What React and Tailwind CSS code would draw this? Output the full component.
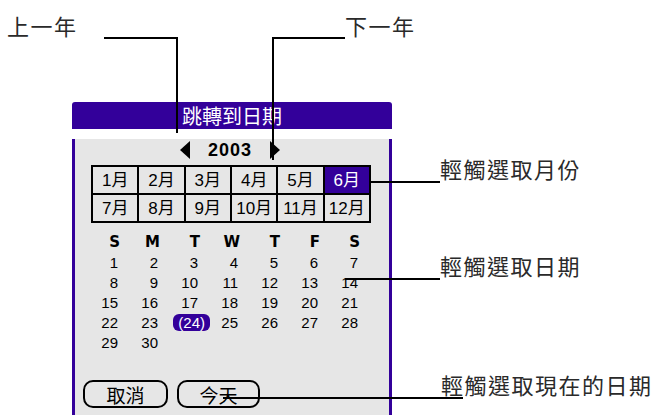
const PURPLE = 'bg-[#33009a]'

const months = ['1月', '2月', '3月', '4月', '5月', '6月', '7月', '8月', '9月', '10月', '11月', '12月']
const weekdays = ['S', 'M', 'T', 'W', 'T', 'F', 'S']
const days = Array.from({ length: 30 }, (_, i) => i + 1)

const CJK = { fontFamily: '"Noto Sans CJK TC", "Noto Sans CJK SC", sans-serif' }

function Arrow({ dir }) {
  return (
    <svg width="10" height="18" viewBox="0 0 10 18" className="block">
      {dir === 'left' ? <polygon points="10,0 10,18 0,9" fill="#000" /> : <polygon points="0,0 0,18 10,9" fill="#000" />}
    </svg>
  )
}

function Label({ children }) {
  return (
    <span className="whitespace-nowrap text-[22px] leading-[22px] tracking-[1.5px] text-[#2a2a2a]" style={CJK}>
      {children}
    </span>
  )
}

// line coming from the dialog, ending under the label on the right
function SideCallout({ className, line, children }) {
  return (
    <div className={`absolute flex items-start ${className}`}>
      <div className={`mt-[24px] h-[2px] shrink-0 bg-black ${line}`} />
      <Label>{children}</Label>
    </div>
  )
}

function PalmButton({ children, width }) {
  return (
    <div className={`flex h-[28px] items-center justify-center rounded-[10px] border-2 border-black text-[19px] leading-none text-black ${width}`}>
      {children}
    </div>
  )
}

export default function App() {
  return (
    <div
      className="relative h-[415px] w-[658px] overflow-hidden bg-white"
      style={{ fontFamily: '"Liberation Sans", "Noto Sans CJK TC", sans-serif' }}
    >
      {/* dialog */}
      <div className="ml-[72px] mt-[102px] w-[320px]">
        <div
          className={`flex h-[27px] items-center justify-center rounded-t-[3px] ${PURPLE} text-[20px] leading-none text-white`}
          style={CJK}
        >
          跳轉到日期
        </div>
        <div className="h-[300px] border-x-[3px] border-[#33009a] bg-[#e6e6e6]">
          <div className="mt-[10px] flex h-[22px] items-center justify-center gap-[18px] pr-[4px]">
            <Arrow dir="left" />
            <span className="text-[18px] font-bold leading-none tracking-[1px] text-black">2003</span>
            <Arrow dir="right" />
          </div>

          <div className="ml-[16px] mt-[4px] grid w-[280px] grid-cols-6 gap-[2px] bg-black p-[2px]">
            {months.map((m) => (
              <div
                key={m}
                className={`flex h-[26px] items-center justify-center text-[17px] leading-none ${
                  m === '6月' ? `${PURPLE} text-white` : 'bg-[#e6e6e6] text-black'
                }`}
              >
                {m}
              </div>
            ))}
          </div>

          <div className="ml-[5px] mt-[9px] grid w-[280px] grid-cols-7">
            {weekdays.map((w, i) => (
              <div
                key={i}
                className="flex h-[20px] items-center justify-end text-[15px] font-bold leading-none text-black"
                style={{ fontFamily: '"DejaVu Sans", sans-serif' }}
              >
                {w}
              </div>
            ))}
            {days.map((d) => (
              <div key={d} className="flex h-[20px] items-center justify-end pr-[2px] text-[15px] leading-none text-black">
                {d === 24 ? (
                  <span className={`-mr-[12px] flex h-[17px] items-center rounded-[6px] ${PURPLE} px-[5px] text-white`}>(24)</span>
                ) : (
                  d
                )}
              </div>
            ))}
          </div>

          <div className="ml-[8px] mt-[28px] flex gap-[9px]" style={CJK}>
            <PalmButton width="w-[85px]">取消</PalmButton>
            <PalmButton width="w-[83px]">今天</PalmButton>
          </div>
        </div>
      </div>

      {/* annotations */}
      <div className="absolute left-[7px] top-[14px] flex items-start gap-[26px]">
        <Label>上一年</Label>
        <div className="mt-[23px] h-[96px] w-[74px] border-r-2 border-t-2 border-black" />
      </div>
      <div className="absolute left-[272px] top-[14px] flex items-start">
        <div className="mt-[23px] h-[123px] w-[73px] border-l-2 border-t-2 border-black" />
        <Label>下一年</Label>
      </div>
      <SideCallout className="left-[370px] top-[157px]" line="w-[70px]">
        輕觸選取月份
      </SideCallout>
      <SideCallout className="left-[345px] top-[254px]" line="w-[95px]">
        輕觸選取日期
      </SideCallout>
      <SideCallout className="left-[223px] top-[373px]" line="w-[240px] -mr-[22px]">
        輕觸選取現在的日期
      </SideCallout>
    </div>
  )
}
